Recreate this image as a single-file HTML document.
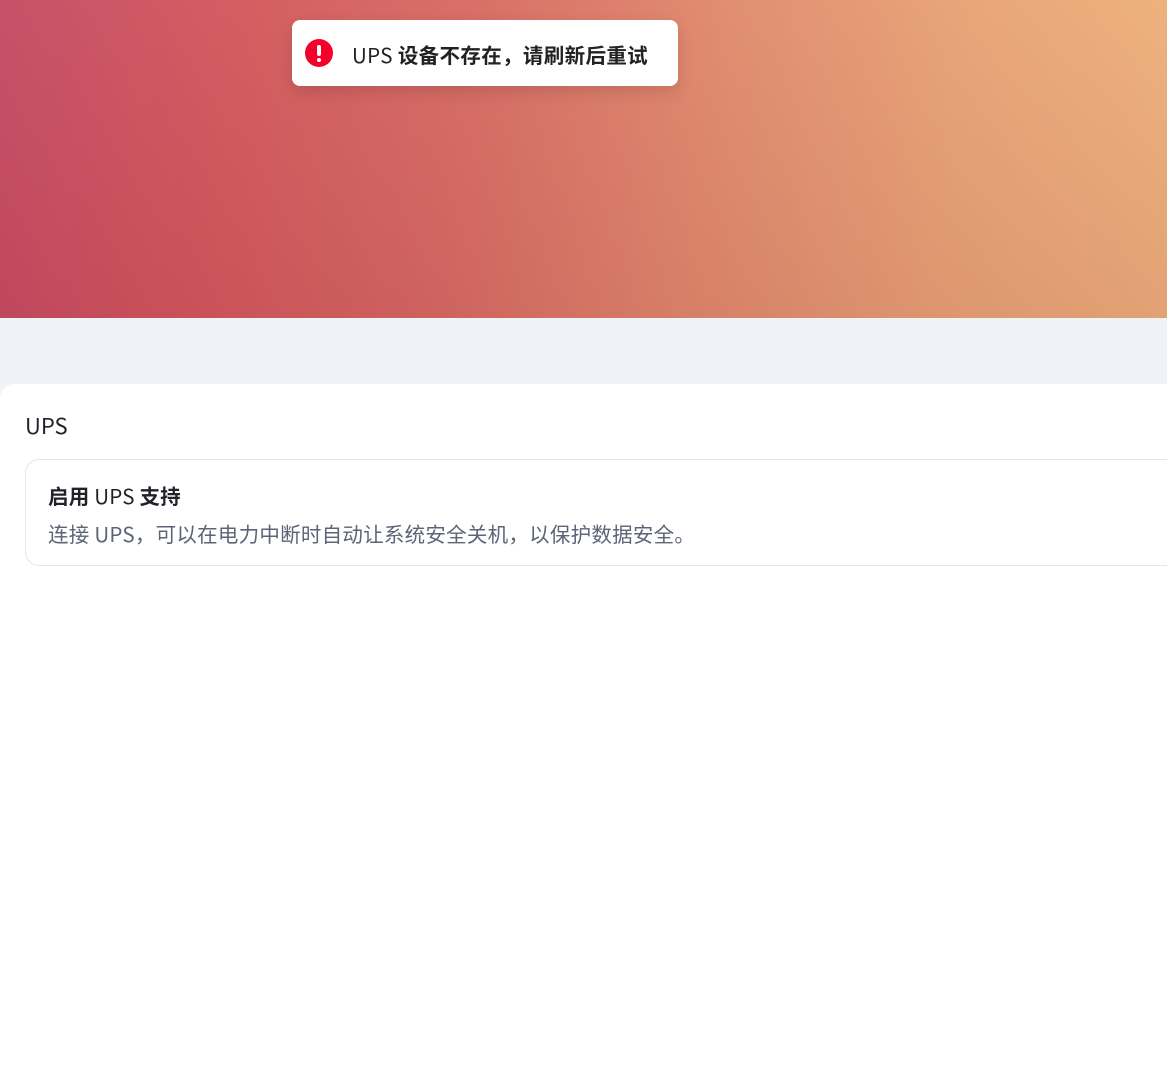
<!DOCTYPE html>
<html><head><meta charset="utf-8"><style>
html,body{margin:0;padding:0;width:1167px;height:1071px;overflow:hidden;background:#fff;font-family:"Noto Sans CJK SC","Liberation Sans",sans-serif;}
.hero{position:absolute;left:0;top:0;width:1167px;height:318px;
background:linear-gradient(100deg,#c44a63 0%,#d2585b 20%,#d76b62 40%,#e08a6c 60%,#e8a374 80%,#eeb27b 100%);}
.hero:after{content:"";position:absolute;inset:0;background:linear-gradient(180deg,rgba(255,255,255,0.04),rgba(120,20,60,0.1));}
.gray{position:absolute;left:0;top:318px;width:1167px;height:80px;background:#eff3f8;}
.card{position:absolute;left:0;top:384px;width:1180px;height:700px;background:#fff;border-radius:14px 0 0 0;}
.title{position:absolute;left:25px;top:409px;font-size:22px;color:#1f2328;line-height:32px;}
.box{position:absolute;left:25px;top:459px;width:1160px;height:107px;border:1px solid #e3e6ea;border-radius:14px;box-sizing:border-box;}
.h{position:absolute;left:48px;top:480px;font-size:20.5px;font-weight:bold;color:#1f2328;line-height:30px;letter-spacing:0.2px;}
.d{position:absolute;left:48px;top:518px;font-size:20.5px;color:#5b6577;line-height:30px;white-space:nowrap;letter-spacing:0.25px;}
.toast{position:absolute;left:292px;top:20px;width:386px;height:66px;background:#fff;border-radius:8px;box-shadow:0 6px 16px rgba(0,0,0,0.12);}
.ic{position:absolute;left:13px;top:19px;width:28px;height:28px;border-radius:50%;background:#f5002a;}
.ic:before{content:"";position:absolute;left:12px;top:6px;width:4px;height:11px;background:#fff;border-radius:2px;}
.ic:after{content:"";position:absolute;left:12px;top:19px;width:4px;height:4px;background:#fff;border-radius:2px;}
.tt{position:absolute;left:60px;top:19px;font-size:20.5px;font-weight:bold;color:#222;white-space:nowrap;line-height:30px;letter-spacing:0.35px;}
.tt span,.h span{font-weight:normal}
</style></head><body>
<div class="hero"></div>
<div class="gray"></div>
<div class="card"></div>
<div class="title">UPS</div>
<div class="box"></div>
<div class="h">启用 <span>UPS</span> 支持</div>
<div class="d">连接 UPS，可以在电力中断时自动让系统安全关机，以保护数据安全。</div>
<div class="toast"><div class="ic"></div><div class="tt"><span>UPS</span> 设备不存在，请刷新后重试</div></div>
</body></html>
